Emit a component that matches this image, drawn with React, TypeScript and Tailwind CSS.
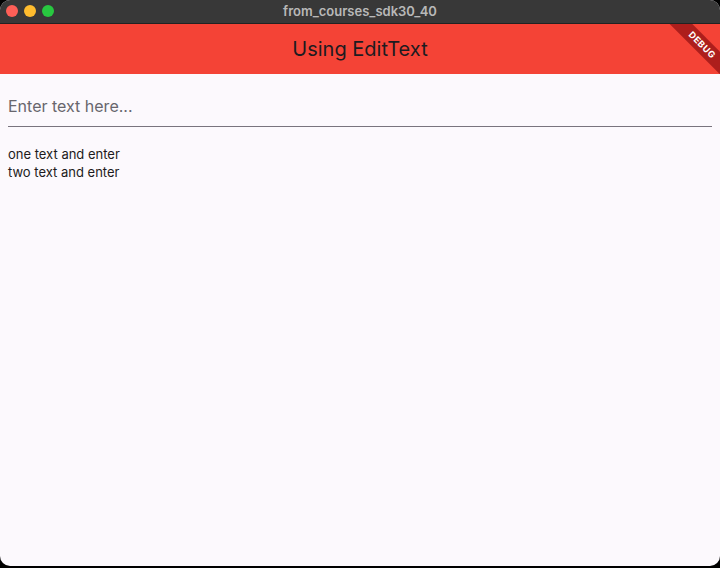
const App = () => {
  return (
    <div className="w-[720px] h-[568px] bg-black overflow-hidden" style={{ fontFamily: "Inter, Roboto, sans-serif" }}>
      <div className="flex flex-col h-[566px] rounded-[10px] overflow-hidden bg-[#fcf9fd]">
        {/* window title bar */}
        <div className="relative h-6 shrink-0 bg-[#383838] flex items-center justify-center border-b border-[#222]">
          <div className="absolute left-[6px] top-[5px] flex gap-[6px]">
            <span className="w-3 h-3 rounded-full bg-[#fe5f57]" />
            <span className="w-3 h-3 rounded-full bg-[#febc2e]" />
            <span className="w-3 h-3 rounded-full bg-[#28c840]" />
          </div>
          <span className="text-[13px] font-semibold text-[#b8b8b8]">from_courses_sdk30_40</span>
        </div>

        {/* app bar */}
        <div className="relative h-[50px] shrink-0 bg-[#f44336] flex items-center justify-center overflow-hidden">
          <span className="text-[20px] text-[#1d1b20]">Using EditText</span>
          <div className="absolute top-[13px] right-[-26px] w-[88px] h-[16px] rotate-45 bg-[#a01818]/85 flex items-center justify-center">
            <span className="text-[9px] font-bold text-white tracking-[0.5px]">DEBUG</span>
          </div>
        </div>

        {/* body */}
        <div className="flex-1 px-2">
          <div className="pt-[20px] pb-[8px] border-b border-[#79747e]">
            <span className="text-[16px] text-[#68666d]">Enter text here...</span>
          </div>
          <div className="pt-[18px] text-[13px] leading-[18px] text-[#1d1b20]">
            <div>one text and enter</div>
            <div>two text and enter</div>
          </div>
        </div>
      </div>
    </div>
  );
};

export default App;
